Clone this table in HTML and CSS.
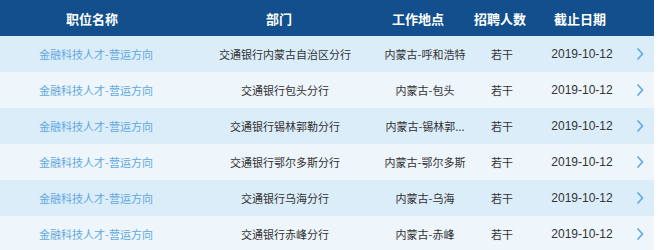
FILE: index.html
```html
<!DOCTYPE html>
<html lang="zh">
<head>
<meta charset="utf-8">
<link rel="stylesheet" href="styles.css">
</head>
<body>
<div class="table">
  <div class="head">
    <div class="h1">职位名称</div>
    <div class="h2">部门</div>
    <div class="h3">工作地点</div>
    <div class="h4">招聘人数</div>
    <div class="h5">截止日期</div>
  </div>
  <div class="row odd">
    <div class="c1">金融科技人才-营运方向</div>
    <div class="c2">交通银行内蒙古自治区分行</div>
    <div class="c3">内蒙古-呼和浩特</div>
    <div class="c4">若干</div>
    <div class="c5">2019-10-12</div>
    <div class="c6"><svg width="8" height="14" viewBox="0 0 8 14"><path d="M1.5 1.5 L6.5 7 L1.5 12.5" fill="none" stroke="#5aa9e6" stroke-width="1.6"/></svg></div>
  </div>
  <div class="row even">
    <div class="c1">金融科技人才-营运方向</div>
    <div class="c2">交通银行包头分行</div>
    <div class="c3">内蒙古-包头</div>
    <div class="c4">若干</div>
    <div class="c5">2019-10-12</div>
    <div class="c6"><svg width="8" height="14" viewBox="0 0 8 14"><path d="M1.5 1.5 L6.5 7 L1.5 12.5" fill="none" stroke="#5aa9e6" stroke-width="1.6"/></svg></div>
  </div>
  <div class="row odd">
    <div class="c1">金融科技人才-营运方向</div>
    <div class="c2">交通银行锡林郭勒分行</div>
    <div class="c3">内蒙古-锡林郭...</div>
    <div class="c4">若干</div>
    <div class="c5">2019-10-12</div>
    <div class="c6"><svg width="8" height="14" viewBox="0 0 8 14"><path d="M1.5 1.5 L6.5 7 L1.5 12.5" fill="none" stroke="#5aa9e6" stroke-width="1.6"/></svg></div>
  </div>
  <div class="row even">
    <div class="c1">金融科技人才-营运方向</div>
    <div class="c2">交通银行鄂尔多斯分行</div>
    <div class="c3">内蒙古-鄂尔多斯</div>
    <div class="c4">若干</div>
    <div class="c5">2019-10-12</div>
    <div class="c6"><svg width="8" height="14" viewBox="0 0 8 14"><path d="M1.5 1.5 L6.5 7 L1.5 12.5" fill="none" stroke="#5aa9e6" stroke-width="1.6"/></svg></div>
  </div>
  <div class="row odd">
    <div class="c1">金融科技人才-营运方向</div>
    <div class="c2">交通银行乌海分行</div>
    <div class="c3">内蒙古-乌海</div>
    <div class="c4">若干</div>
    <div class="c5">2019-10-12</div>
    <div class="c6"><svg width="8" height="14" viewBox="0 0 8 14"><path d="M1.5 1.5 L6.5 7 L1.5 12.5" fill="none" stroke="#5aa9e6" stroke-width="1.6"/></svg></div>
  </div>
  <div class="row even">
    <div class="c1">金融科技人才-营运方向</div>
    <div class="c2">交通银行赤峰分行</div>
    <div class="c3">内蒙古-赤峰</div>
    <div class="c4">若干</div>
    <div class="c5">2019-10-12</div>
    <div class="c6"><svg width="8" height="14" viewBox="0 0 8 14"><path d="M1.5 1.5 L6.5 7 L1.5 12.5" fill="none" stroke="#5aa9e6" stroke-width="1.6"/></svg></div>
  </div>
</div>
</body>
</html>
```

FILE: styles.css
```css
html, body {
  margin: 0;
  padding: 0;
  background: #ffffff;
}
body {
  font-family: "Noto Sans CJK SC", "Liberation Sans", sans-serif;
}
.table {
  width: 654px;
}
.head {
  display: grid;
  grid-template-columns: 184px 190px 88px 76px 84px 32px;
  height: 36px;
  align-items: center;
  background: #124f8c;
  color: #ffffff;
  font-size: 13px;
  font-weight: bold;
  text-align: center;
}
.row {
  display: grid;
  grid-template-columns: 192px 186px 94px 60px 100px 22px;
  height: 36px;
  align-items: center;
  text-align: center;
  font-size: 11px;
  color: #333333;
}
.odd { background: #dcedfa; }
.even { background: #eef5fb; }
.c1 { color: #5fa8e0; }
.c3 { white-space: nowrap; }
.c5 { font-family: "Liberation Sans", sans-serif; font-size: 12px; }
.c6 {
  display: flex;
  justify-content: flex-start;
  align-items: center;
  padding-left: 4px;
}
.c6 svg { display: block; }
```
